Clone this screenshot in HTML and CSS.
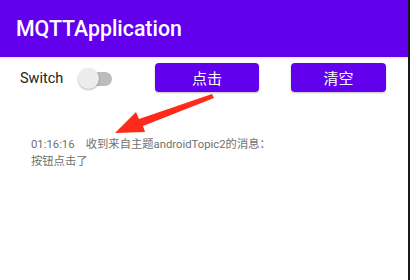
FILE: index.html
```html
<!DOCTYPE html>
<html>
	<head>
		<meta charset="utf-8">
		<title>MQTTApplication</title>
		<link rel="stylesheet" href="styles.css">
	</head>
	<body>
	  <div class="screen">
	    <div class="appbar">MQTTApplication</div>
	    <div class="controls">
	      <span class="label">Switch</span>
	      <span class="switch"><span class="track"></span><span class="thumb"></span></span>
	      <button class="btn btn-click">点击</button>
	      <button class="btn btn-clear">清空</button>
	    </div>
	    <div class="log">
	      <p>01:16:16&nbsp;&nbsp;&nbsp;&nbsp;收到来自主题androidTopic2的消息：</p>
	      <p>按钮点击了</p>
	    </div>
	    <svg class="arrow" width="120" height="50" viewBox="0 0 120 50">
	      <path d="M98 4 L100 8 L29 36 L31 42 L1 43 L22 22 L25 29 Z" fill="#ff2a1a"/>
	    </svg>
	  </div>
	</body>
</html>
```

FILE: styles.css
```css
html, body {
  margin: 0;
  padding: 0;
  background: #fff;
}
.screen {
  position: relative;
  width: 408px;
  height: 280px;
  border-right: 2px solid #1a1a1a;
  font-family: Roboto, "Noto Sans CJK SC", sans-serif;
}
.appbar {
  height: 57px;
  background: #6200ee;
  color: #fff;
  font-size: 21.3px;
  font-weight: 500;
  line-height: 58px;
  padding-left: 16px;
  box-shadow: 0 1px 2px rgba(0,0,0,.15);
}
.controls {
  display: flex;
  align-items: center;
  height: 29px;
  margin-top: 6px;
  padding-left: 20px;
}
.label {
  width: 58px;
  padding-top: 2px;
  font-size: 14.5px;
  color: #222;
}
.switch {
  position: relative;
  width: 36px;
  height: 22px;
  margin-top: 2px;
}
.track {
  position: absolute;
  left: 5px;
  top: 4px;
  width: 29px;
  height: 14px;
  border-radius: 7px;
  background: #bcbcbc;
}
.thumb {
  position: absolute;
  left: 0;
  top: 0;
  width: 21px;
  height: 21px;
  border-radius: 50%;
  background: #ececec;
  box-shadow: 0 1px 2px rgba(0,0,0,.3);
}
.btn {
  height: 29px;
  border: none;
  border-radius: 4px;
  background: #6200ee;
  color: #fff;
  font-family: "Noto Sans CJK SC", sans-serif;
  font-size: 15px;
  padding: 0;
  box-shadow: 0 1px 2px rgba(0,0,0,.25);
}
.btn-click {
  width: 104px;
  margin-left: 41px;
}
.btn-clear {
  width: 95px;
  margin-left: 32px;
}
.log {
  padding: 44px 0 0 31px;
  font-size: 11.3px;
  color: #707070;
}
.log p {
  margin: 0;
  line-height: 17px;
}
.arrow {
  position: absolute;
  left: 114px;
  top: 90px;
}
```
